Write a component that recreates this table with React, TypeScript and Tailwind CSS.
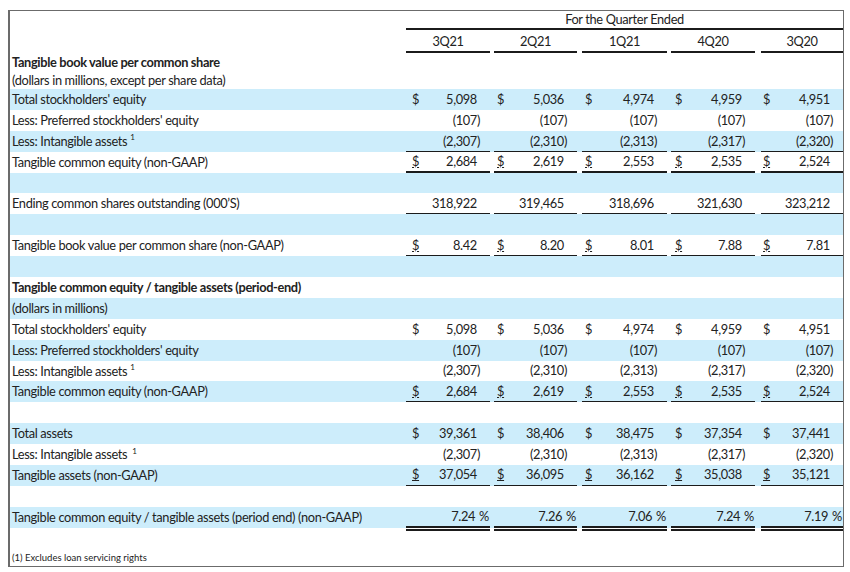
import React from 'react'

type Line = 'none' | 'single' | 'double'

interface Row {
  label?: string
  bold?: boolean
  sup?: 'near' | 'far'
  dollar?: boolean
  vals?: string[]
  line?: Line
  pct?: boolean
}

const intangible = ['(2,307)', '(2,310)', '(2,313)', '(2,317)', '(2,320)']
const tce = ['2,684', '2,619', '2,553', '2,535', '2,524']
const equity = ['5,098', '5,036', '4,974', '4,959', '4,951']
const preferred = ['(107)', '(107)', '(107)', '(107)', '(107)']

const rows: Row[] = [
  { label: "Total stockholders' equity", dollar: true, vals: equity },
  { label: "Less: Preferred stockholders' equity", vals: preferred },
  { label: 'Less: Intangible assets', sup: 'near', vals: intangible, line: 'single' },
  { label: 'Tangible common equity (non-GAAP)', dollar: true, vals: tce, line: 'double' },
  {},
  {
    label: 'Ending common shares outstanding (000’S)',
    vals: ['318,922', '319,465', '318,696', '321,630', '323,212'],
    line: 'double',
  },
  {},
  {
    label: 'Tangible book value per common share (non-GAAP)',
    dollar: true,
    vals: ['8.42', '8.20', '8.01', '7.88', '7.81'],
    line: 'double',
  },
  {},
  { label: 'Tangible common equity / tangible assets (period-end)', bold: true },
  { label: '(dollars in millions)' },
  { label: "Total stockholders' equity", dollar: true, vals: equity },
  { label: "Less: Preferred stockholders' equity", vals: preferred },
  { label: 'Less: Intangible assets', sup: 'near', vals: intangible, line: 'single' },
  { label: 'Tangible common equity (non-GAAP)', dollar: true, vals: tce, line: 'double' },
  {},
  { label: 'Total assets', dollar: true, vals: ['39,361', '38,406', '38,475', '37,354', '37,441'] },
  { label: 'Less: Intangible assets', sup: 'far', vals: intangible, line: 'single' },
  {
    label: 'Tangible assets (non-GAAP)',
    dollar: true,
    vals: ['37,054', '36,095', '36,162', '35,038', '35,121'],
    line: 'double',
  },
  {},
  {
    label: 'Tangible common equity / tangible assets (period end) (non-GAAP)',
    vals: ['7.24', '7.26', '7.06', '7.24', '7.19'],
    line: 'double',
    pct: true,
  },
]

const quarters = ['3Q21', '2Q21', '1Q21', '4Q20', '3Q20']

// column widths + the small gaps between the underline segments
const colCls = [
  'w-[84px]',
  'ml-[4px] w-[83px]',
  'ml-[5px] w-[85px]',
  'ml-[4px] w-[84px]',
  'ml-[6px] w-[82px]',
]
const dollarPad = ['pl-[6px]', 'pl-[3px]', 'pl-[3px]', 'pl-[4px]', 'pl-[2px]']

const lineCls: Record<Line, string> = {
  none: 'h-[20.9px]',
  single: 'h-[22.6px] border-b-2 border-[#1b1b1b]',
  double: 'h-[24.6px] border-b-[5px] border-double border-[#1b1b1b]',
}

function ValueCell({ v, i, row }: { v: string; i: number; row: Row }) {
  const line = row.line ?? 'none'
  const neg = v.startsWith('(')
  return (
    <div className={`${colCls[i]} ${lineCls[line]} flex shrink-0 items-center justify-between`}>
      <span className={`${dollarPad[i]} ${line === 'double' ? 'underline underline-offset-1' : ''}`}>
        {row.dollar ? '$' : ''}
      </span>
      {row.pct ? (
        <span className="pr-[1px]">
          {v}
          <span className="ml-[4px]">%</span>
        </span>
      ) : (
        <span className="pr-[10px]">
          {v}
          {!neg && <span className="invisible">)</span>}
        </span>
      )}
    </div>
  )
}

function DataRow({ row, blue }: { row: Row; blue: boolean }) {
  return (
    <div className={`flex h-[20.9px] items-start ${blue ? 'bg-[#cdedfb]' : 'bg-white'}`}>
      <div
        className={`flex h-[20.9px] w-[396px] shrink-0 items-center pl-[2px] ${row.bold ? 'font-bold' : ''}`}
      >
        {row.label}
        {row.sup && (
          <sup className={`text-[8px] ${row.sup === 'far' ? 'ml-[5px]' : 'ml-[3px]'}`}>1</sup>
        )}
      </div>
      {row.vals?.map((v, i) => <ValueCell key={i} v={v} i={i} row={row} />)}
    </div>
  )
}

export default function App() {
  return (
    <div
      className="h-[572px] w-[850px] bg-white pl-[8px] pt-[10px] text-[12.8px] leading-[15px] tracking-[-0.35px] text-[#222]"
      style={{ fontFamily: 'Lato, "Open Sans", sans-serif' }}
    >
      <div className="flex h-[557px] w-[836px] flex-col border border-l-2 border-[#6b6b6b]">
        {/* header */}
        <div className="flex">
          <div className="w-[396px] shrink-0" />
          <div className="flex h-[19px] w-[437px] items-center justify-center border-b-2 border-[#1b1b1b]">
            For the Quarter Ended
          </div>
        </div>
        <div className="flex">
          <div className="w-[396px] shrink-0" />
          {quarters.map((q, i) => (
            <div
              key={q}
              className={`${colCls[i]} flex h-[23px] shrink-0 items-end justify-center border-b-2 border-[#1b1b1b] pb-[2px]`}
            >
              {q}
            </div>
          ))}
        </div>

        <div className="flex h-[18px] items-center pl-[2px] font-bold">
          Tangible book value per common share
        </div>
        <div className="flex h-[18px] items-center pl-[2px]">
          (dollars in millions, except per share data)
        </div>

        {rows.map((r, idx) => (
          <DataRow key={idx} row={r} blue={idx % 2 === 0} />
        ))}

        <div className="flex flex-1 items-end pb-[2px] pl-[2px] text-[9.5px] leading-[13px] tracking-normal">
          (1) Excludes loan servicing rights
        </div>
      </div>
    </div>
  )
}
